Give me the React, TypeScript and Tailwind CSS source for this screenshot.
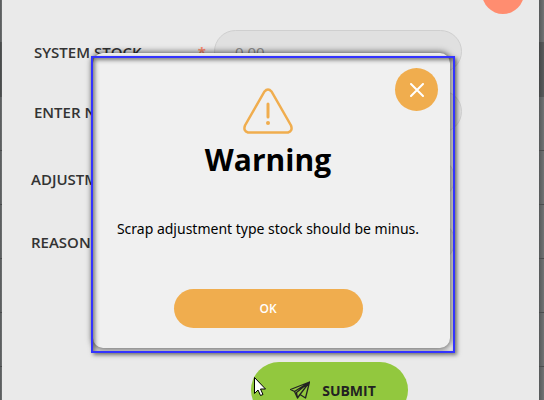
import React from "react";

const labelClass = "text-[15px] leading-5 font-semibold text-[#333] whitespace-nowrap";
const fieldClass =
  "h-[43px] w-[248px] rounded-full border border-[#cfcfcf] bg-[#e0e0e0] px-5 text-[15px] text-[#8a8a8a]";

function Field({ id, label, value, required }: { id: string; label: string; value?: string; required?: boolean }) {
  return (
    <div className="flex items-center justify-between">
      <label htmlFor={id} className={labelClass}>{label}</label>
      <div className="flex items-center gap-2">
        {required && <span className="text-[15px] leading-5 font-bold text-[#ff8d70]">*</span>}
        <input id={id} className={fieldClass} defaultValue={value} />
      </div>
    </div>
  );
}

function TableEdge({ side }: { side: string }) {
  return (
    <div className={"flex shrink-0 flex-col bg-linear-to-r from-[#56595a] to-[#707374] " + side}>
      <div className="h-[42px] shrink-0" />
      <div className="h-[55px] shrink-0 bg-black/20" />
      {[0, 1, 2, 3, 4, 5].map((n) => (
        <div key={n} className="h-[54px] shrink-0 border-b border-[#4a4c4d]" />
      ))}
    </div>
  );
}

export default function App() {
  return (
    <div className="relative flex h-screen overflow-hidden bg-[#6b6d6e] font-['Open_Sans','Noto_Sans',sans-serif]">
      <TableEdge side="w-[2px]" />
      <main className="relative min-w-0 flex-1 bg-[#eaeaea]">
        <button aria-label="Close form" className="absolute -top-7 right-[15px] size-[42px] rounded-full bg-[#ff8d70]" />
        <form className="flex flex-col pt-[30px]">
          <div className="flex flex-col gap-[17px] pr-[77px] pl-8">
            <Field id="system" label="SYSTEM STOCK" value="0.00" required />
            <Field id="stock" label="ENTER NEW STOCK" />
          </div>
          <div className="flex flex-col gap-5 pt-6 pr-[84px] pl-[29px]">
            <Field id="type" label="ADJUSTMENT TYPE" />
            <Field id="reason" label="REASON" />
          </div>
          <button
            type="button"
            className="mt-[99px] ml-[249px] flex h-14 w-[157px] shrink-0 items-center justify-center gap-3 rounded-full bg-[#92c83e] pl-[7px] text-[14px] font-bold text-[#222]"
          >
            <svg width="20" height="18" viewBox="0 0 20 18" fill="none" stroke="#222" strokeWidth="1.3" strokeLinejoin="round">
              <path d="M19.500 1 .500 8.500 4.500 10.500 19.500 1 6.500 11.500 7.500 17 10 13.500 15.500 17 19.500 1 10 13.500M4.500 10.500 7.500 17" />
            </svg>
            SUBMIT
          </button>
        </form>
      </main>
      <TableEdge side="w-[5px]" />

      <section
        role="dialog"
        aria-labelledby="title"
        className="absolute top-[53px] left-[93px] flex h-[295px] w-[357px] flex-col items-center rounded-[10px] bg-[#f0f0f0] pt-[35px] pr-[7px] shadow-[0_0_6px_1px_rgba(0,0,0,0.6)]"
      >
        <button
          aria-label="Close"
          className="absolute top-[15px] right-3 flex size-[43px] items-center justify-center rounded-full bg-[#f0ad4e]"
        >
          <svg width="14" height="14" viewBox="0 0 14 14" stroke="#fff" strokeWidth="2" strokeLinecap="round">
            <path d="M1 1 13 13M13 1 1 13" />
          </svg>
        </button>
        <svg width="50" height="46" viewBox="0 0 50 46" fill="none" stroke="#f0ad4e" strokeWidth="2.500" strokeLinecap="round">
          <path d="M21.500 3.500Q25-.500 28.500 3.500L48 37.500Q50 43 45 44.500H5Q0 43 2 37.500Z" />
          <path d="M25 16V29" strokeWidth="3" />
          <circle cx="25" cy="35" r="2" fill="#f0ad4e" stroke="none" />
        </svg>
        <h1 id="title" className="mt-1 text-[30px] leading-[44px] font-bold text-black">Warning</h1>
        <p className="mt-[37px] font-['Noto_Sans',sans-serif] text-[14px] leading-5 whitespace-nowrap text-black">
          Scrap adjustment type stock should be minus.
        </p>
        <button className="mt-[50px] h-[39px] w-[189px] rounded-full bg-[#f0ad4e] text-[12px] font-semibold text-white">OK</button>
      </section>
      <div className="pointer-events-none absolute top-[56px] left-[91px] h-[297px] w-[364px] border-2 border-[#3333ff] shadow-[2px_2px_4px_rgba(0,0,0,0.5),inset_2px_2px_4px_rgba(0,0,0,0.5)]" />
      <svg className="pointer-events-none absolute top-[377px] left-[254px]" width="12" height="19" viewBox="0 0 12 19" fill="#fff" stroke="#000">
        <path d="M.5.5V16.500L4 13 6.500 18.500 9 17.500 6.500 12H11.500Z" />
      </svg>
    </div>
  );
}
